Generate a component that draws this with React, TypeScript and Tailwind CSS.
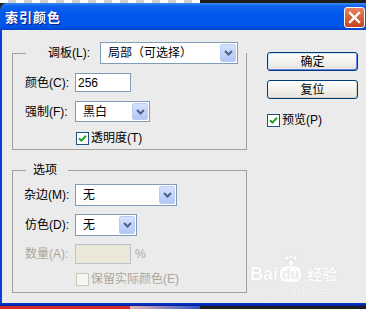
import React from "react";

function Chevron() {
  return (
    <svg width="9" height="6" viewBox="0 0 9 6">
      <path d="M1 1 L4.5 4.5 L8 1" stroke="#4d6185" strokeWidth="2" fill="none" />
    </svg>
  );
}

function Select({ className, text }: { className: string; text: string }) {
  return (
    <div className={`${className} bg-white border border-[#7f9db9] flex items-stretch p-px`}>
      <span className="flex-1 flex items-center pl-[6px] text-[12px] leading-none text-black whitespace-nowrap">{text}</span>
      <span className="w-[16px] rounded-[2px] bg-linear-to-b from-[#d6e2fd] to-[#b3c7f7] border border-[#bccdf4] flex items-center justify-center">
        <Chevron />
      </span>
    </div>
  );
}

function CheckBox({ checked, disabled }: { checked?: boolean; disabled?: boolean }) {
  return (
    <span
      className={
        disabled
          ? "w-[13px] h-[13px] border border-[#cac8bb] bg-[#f6f6f2] inline-flex items-center justify-center"
          : "w-[13px] h-[13px] border border-[#1c5180] bg-white inline-flex items-center justify-center"
      }
    >
      {checked ? (
        <svg width="9" height="9" viewBox="0 0 9 9">
          <path d="M1 4.2 L3.4 6.6 L8 1.8" stroke="#21a121" strokeWidth="2" fill="none" />
        </svg>
      ) : null}
    </span>
  );
}

export default function App() {
  return (
    <div className="w-[366px] h-[309px] overflow-hidden bg-[#1e1e1e] flex flex-col relative font-['Liberation_Sans','Noto_Sans_CJK_SC',sans-serif] text-[12px] text-black">
      {/* top strip */}
      <div className="h-[3px] flex shrink-0">
        <div className="w-[200px] h-full bg-[repeating-linear-gradient(90deg,#ffffff_0_8px,#cfcfcf_8px_16px)]" />
        <div className="flex-1 h-full bg-[#1e1e1e]" />
      </div>

      {/* title bar */}
      <div className="h-[27px] shrink-0 rounded-tl-[7px] bg-[linear-gradient(#3b8bf7_0%,#0f62ee_12%,#0058ee_45%,#0054e6_85%,#0045cc_100%)] flex items-start justify-between pl-[5px] pr-[1px]">
        <span className="pt-[6px] text-[13px] leading-[16px] font-bold tracking-[1px] text-white font-['Noto_Sans_CJK_SC',sans-serif] [text-shadow:1px_1px_0_#0a1e8c]">
          索引颜色
        </span>
        <div className="mt-[4px] w-[21px] h-[21px] rounded-[3px] border border-white bg-linear-to-b from-[#e8825c] to-[#c4421c] flex items-center justify-center">
          <svg width="13" height="13" viewBox="0 0 13 13">
            <path d="M2 2 L11 11 M11 2 L2 11" stroke="white" strokeWidth="2.4" strokeLinecap="square" fill="none" />
          </svg>
        </div>
      </div>

      {/* body */}
      <div className="h-[273px] shrink-0 bg-[#ebebeb] border-l-2 border-[#0b3fd8] flex relative">
        {/* left column */}
        <div className="ml-[10px] w-[235px] flex flex-col">
          <fieldset className="mt-[12px] border border-[#a0a0a0] pl-[12px] pb-[3px] min-w-0">
            <legend className="ml-[1px] pl-[22px] pr-[8px]">
              <div className="flex items-center gap-[10px]">
                <span>调板(L):</span>
                <Select className="w-[138px] h-[22px]" text="局部（可选择）" />
              </div>
            </legend>
            <div className="mt-[9px] grid grid-cols-[50px_auto] items-center justify-start gap-y-[9px]">
              <span>颜色(C):</span>
              <div className="w-[56px] h-[19px] bg-white border border-[#7f9db9] flex items-center pl-[2px] text-[12px]">256</div>
              <span>强制(F):</span>
              <Select className="w-[75px] h-[21px]" text="黑白" />
              <span />
              <div className="flex items-center gap-[2px] h-[16px] -mt-px pl-px">
                <CheckBox checked />
                <span>透明度(T)</span>
              </div>
            </div>
          </fieldset>

          <fieldset className="mt-[12px] border border-[#a0a0a0] pl-[12px] pb-[5px] min-w-0">
            <legend className="ml-[1px] pl-[7px] pr-[11px] leading-[16px]">选项</legend>
            <div className="mt-[6px] grid grid-cols-[50px_auto] items-center justify-start gap-y-[8px]">
              <span className="-ml-px">杂边(M):</span>
              <Select className="w-[102px] h-[22px]" text="无" />
              <span>仿色(D):</span>
              <Select className="w-[62px] h-[22px]" text="无" />
              <span className="text-[#aca899]">数量(A):</span>
              <div className="flex items-center gap-[4px]">
                <div className="w-[56px] h-[20px] bg-[#ebe8d8] border border-[#bac3cc]" />
                <span className="text-[#aca899]">%</span>
              </div>
              <span />
              <div className="flex items-center gap-[2px] h-[16px] -mt-px pl-px">
                <CheckBox disabled />
                <span className="text-[#aca899]">保留实际颜色(E)</span>
              </div>
            </div>
          </fieldset>
        </div>

        {/* right column */}
        <div className="ml-[20px] pt-[22px] flex flex-col">
          <button className="w-[91px] h-[19px] rounded-[3px] border border-[#003c74] bg-linear-to-b from-[#ffffff] to-[#e5e3da] shadow-[inset_1px_1px_0_#cee7ff,inset_-1px_-1px_0_#6982ee] flex items-center justify-center text-[12px] leading-none">
            确定
          </button>
          <button className="mt-[9px] w-[91px] h-[19px] rounded-[3px] border border-[#003c74] bg-linear-to-b from-[#ffffff] to-[#e5e3da] shadow-[inset_-1px_-1px_0_#d6d0c5] flex items-center justify-center text-[12px] leading-none">
            复位
          </button>
          <div className="mt-[13px] flex items-center gap-[2px] h-[16px]">
            <CheckBox checked />
            <span>预览(P)</span>
          </div>
        </div>

        {/* watermark */}
        <div className="absolute left-[248px] top-[224px] flex flex-col items-start text-white opacity-90 pointer-events-none">
          <div className="flex items-end gap-[2px]">
            <span className="text-[18px] leading-[16px] font-bold font-['Liberation_Sans',sans-serif] [text-shadow:0_0_1px_#c8c8c8]">Bai</span>
            <div className="flex flex-col items-center">
              <svg width="18" height="12" viewBox="0 0 18 12">
                <circle cx="5" cy="4" r="2.2" fill="white" stroke="#d0d0d0" strokeWidth="0.5" />
                <circle cx="9" cy="2.5" r="2.2" fill="white" stroke="#d0d0d0" strokeWidth="0.5" />
                <circle cx="13" cy="4" r="2.2" fill="white" stroke="#d0d0d0" strokeWidth="0.5" />
                <circle cx="9" cy="9" r="3" fill="white" stroke="#d0d0d0" strokeWidth="0.5" />
              </svg>
              <span className="px-[2px] rounded-[6px] bg-white text-[#ebebeb] text-[14px] leading-[16px] font-bold font-['Liberation_Sans',sans-serif] shadow-[0_0_1px_#c8c8c8]">du</span>
            </div>
            <span className="ml-[4px] text-[15px] leading-[16px] font-bold font-['Noto_Sans_CJK_SC',sans-serif] [text-shadow:0_0_1px_#c8c8c8]">经验</span>
          </div>
          <span className="mt-[2px] text-[11px] leading-[12px] font-['Liberation_Serif',serif] [text-shadow:0_0_1px_#c8c8c8]">jingyan.baidu.com</span>
        </div>
      </div>

      {/* bottom frame */}
      <div className="h-[3px] shrink-0 bg-linear-to-b from-[#0a3ad0] to-[#00209e]" />
      <div className="h-[3px] shrink-0 flex">
        <div className="w-[130px] h-full bg-[#d42a2a]" />
        <div className="w-[70px] h-full bg-linear-to-r from-[#e8b0b0] to-[#3050c0]" />
        <div className="flex-1 h-full bg-[#1e1e1e]" />
      </div>
    </div>
  );
}
